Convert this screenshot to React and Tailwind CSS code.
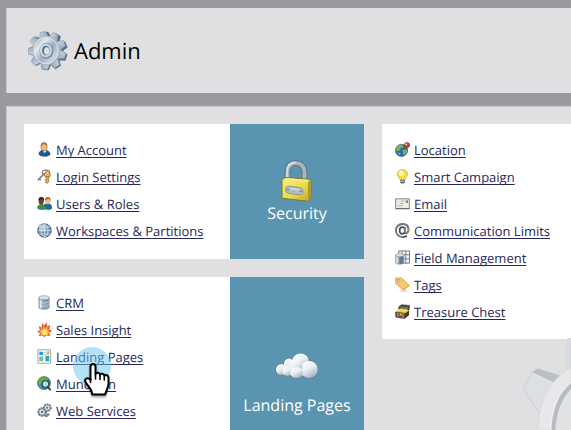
import React from "react";

function Icon({ children, className = "h-[15px] w-[15px]", viewBox = "0 0 16 16" }) {
  return (
    <svg aria-hidden="true" className={`shrink-0 ${className}`} viewBox={viewBox}>
      {children}
    </svg>
  );
}

const gearTeeth = [0, 40, 80, 120, 160, 200, 240, 280, 320];

function AdminGear() {
  return (
    <svg aria-hidden="true" className="h-11 w-10 shrink-0" viewBox="0 0 40 44">
      <defs>
        <linearGradient id="gearSteel" gradientUnits="userSpaceOnUse" x1="12" y1="4" x2="26" y2="4">
          <stop offset="0" stopColor="#d3dee8" />
          <stop offset="1" stopColor="#8c9fb0" />
        </linearGradient>
        <linearGradient id="gearFace" x1="0" y1="0" x2="1" y2="1">
          <stop offset="0" stopColor="#93a6b8" />
          <stop offset=".3" stopColor="#dfe8ef" />
          <stop offset=".55" stopColor="#9db0c1" />
          <stop offset=".8" stopColor="#c8d5e0" />
          <stop offset="1" stopColor="#8296a9" />
        </linearGradient>
      </defs>
      <g fill="#5c6f82" stroke="#4d5f70" strokeWidth=".6">
        {gearTeeth.map((a) => (
          <path key={a} d="M14.500 10 16.500 2.800H22.500L24.500 10Z" transform={`translate(1.500 .6) rotate(${a - 12} 19 21.500)`} />
        ))}
        <ellipse cx="20" cy="22" rx="13.500" ry="14.500" />
      </g>
      <g fill="url(#gearSteel)" stroke="#7c8fa1" strokeWidth=".5">
        {gearTeeth.map((a) => (
          <path key={a} d="M14 10 16 2.500H21.500L24 10Z" transform={`rotate(${a - 12} 19 21.500)`} />
        ))}
      </g>
      <ellipse cx="18.500" cy="21.500" rx="13.500" ry="14.500" fill="#a2b4c4" />
      <ellipse cx="18" cy="21.500" rx="12.200" ry="13.300" fill="url(#gearFace)" stroke="#dfe8ef" strokeWidth="1" />
      <ellipse cx="18.500" cy="21.800" rx="7" ry="8" fill="#8194a7" />
      <ellipse cx="17.800" cy="21.300" rx="6" ry="6.900" fill="#cbd8e3" />
      <ellipse cx="17.800" cy="21.500" rx="3.700" ry="4.800" fill="#5b6e83" />
      <ellipse cx="18.600" cy="22" rx="2.600" ry="3.800" fill="#e0e0e2" />
    </svg>
  );
}

const UserIcon = () => (
  <Icon>
    <path d="M2 13c0-3 3-4.500 6-4.500s6 2 6 4.500c-1.500 3-10 3-12 0Z" fill="#175b92" stroke="#113d68" strokeWidth=".6" />
    <path d="m6 8.500 2 3.500 2.500-3Z" fill="#eef4fa" />
    <ellipse cx="7.500" cy="5" rx="3.200" ry="4.300" fill="#edbd83" stroke="#84592b" strokeWidth=".6" />
    <path d="M4.200 5C3.600 2 5 .4 7.500.4S11.400 2 10.800 5C10 3 8 2.500 6.500 2.500Z" fill="#a87837" />
  </Icon>
);

const KeysIcon = () => (
  <Icon>
    <path d="m1 12 7-7.500" stroke="#777f85" strokeWidth="1.800" />
    <path d="m2 10 2 2" stroke="#777f85" strokeWidth="1.300" />
    <ellipse cx="9.500" cy="3.500" rx="4" ry="2.200" fill="none" stroke="#6c757c" strokeWidth="1.300" />
    <circle cx="11" cy="6" r="3.200" fill="#e7b562" stroke="#8d6427" strokeWidth=".8" />
    <path d="M10 8h2.500v6L11 15.500 8.500 14l1.500-1-1.500-1.500L10 10Z" fill="#dfa64b" stroke="#936523" strokeWidth=".6" />
    <path d="m11 4 2-2" stroke="#f6f6f6" />
  </Icon>
);

const UsersIcon = () => (
  <Icon>
    <path d="M7 12c0-3 2-4 4.500-4S16 10 16 13c-2 2-7 2-9-1Z" fill="#2467a0" stroke="#173c6b" strokeWidth=".5" />
    <ellipse cx="11.500" cy="5" rx="2.700" ry="3.700" fill="#edbd83" />
    <path d="M8.500 5c-.5-3 1-4 3-4s3.500 1 2.800 4L12 3Z" fill="#a7722e" />
    <path d="M.5 13c0-3 2-4 4.500-4s5 1.500 5 4c-1 2-8 2-9.500 0Z" fill="#2b944f" stroke="#175c2e" strokeWidth=".5" />
    <ellipse cx="4.500" cy="5.500" rx="2.700" ry="3.700" fill="#70402a" />
    <path d="M1.700 5C1 2.500 2.400 1 4.600 1s3.600 1.500 2.800 4L5 3Z" fill="#2b2422" />
  </Icon>
);

const GlobeIcon = () => (
  <Icon>
    <circle cx="8" cy="8" r="7.200" fill="#6f99ba" stroke="#44596b" />
    <ellipse cx="6" cy="5.500" rx="4" ry="3.800" fill="#a9c7dc" />
    <path d="M8 1v14M1 8h14M2.500 4.200h11M2.500 11.800h11" stroke="#dfeaf2" strokeWidth=".7" />
    <ellipse cx="8" cy="8" rx="3.700" ry="7" fill="none" stroke="#dfeaf2" strokeWidth=".7" />
  </Icon>
);

function Cylinder() {
  return (
    <>
      <path d="M2 3v10c0 3 11 3 11 0V3Z" fill="#93a6b4" stroke="#63727e" strokeWidth=".6" />
      <path d="M3 4v10l2 .7V5Z" fill="#dce5eb" />
      <path d="M8 5.500h4M8 8.500h4M8 11.500h4" stroke="#597488" />
      <ellipse cx="7.500" cy="3" rx="5.500" ry="2.200" fill="#dae2e7" stroke="#73818c" strokeWidth=".6" />
      <path d="M2 7c1 2 10 2 11 0M2 10.300c1 2 10 2 11 0" fill="none" stroke="#ecf1f4" strokeWidth=".7" />
    </>
  );
}

const DatabaseIcon = () => <Icon><Cylinder /></Icon>;

const FlameIcon = () => (
  <Icon>
    <path d="M3 9 2 4l3 2 .5-5L8 4l2-4 1 5 3-2-1 5 3 1-3 3 1 3-4-.5L8 16l-2.500-1.500L2 15l1-3-3-2Z" fill="#e7532b" />
    <path d="m4 9 0-3 2 2L7 4l2 3 2-3v4l2 0-1 2 2 1-2 1 0 2-2-.5L8 15l-2-1.500-2 .5.500-2L2 11Z" fill="#ffb52f" />
    <path d="m5 9 2 0 1-2 1 2 2 0-1 2 1 2H9l-1 1-1-1H5l1-2Z" fill="#fff08d" />
  </Icon>
);

const PageIcon = () => (
  <Icon>
    <path d="M1 .8h13.500v14.400H1Z" fill="#f8faf9" stroke="#8b989f" strokeWidth=".9" />
    <path d="M2.500 3h4v3.500h-4ZM9 7.500h4V13H9Z" fill="#2499dc" />
    <path d="M2.500 8h4v5h-4Z" fill="#5fb7df" />
    <path d="M8 3h1.500v1.200H8ZM10.500 2.500H13V5h-2.500Z" fill="#e99a64" />
    <path d="M3 10h3M3 12h3M8 6h5M8 10h5" stroke="#91bd6c" strokeWidth=".8" />
  </Icon>
);

const MunchkinIcon = () => (
  <Icon>
    <circle cx="7.500" cy="7.500" r="7" fill="#3d80b4" stroke="#436066" strokeWidth=".6" />
    <path d="M1 6c1-4 4-6 7-5l4 2-2 2-3-1-1 3-3 2 2 4-2-1Z" fill="#64ad45" />
    <path d="m12 3 2 4-2 4-3 3-2 0 3-4Z" fill="#397c43" />
    <path d="m11 11 3.500 4" stroke="#323e45" strokeWidth="2" />
    <circle cx="9" cy="8.500" r="3.500" fill="#b3def2" stroke="#2f4857" strokeWidth="1.200" />
  </Icon>
);

const ServicesIcon = () => (
  <Icon>
    <circle cx="5.500" cy="9.500" r="4.300" fill="#9aa6af" stroke="#596670" strokeWidth="1.500" strokeDasharray="2 1" />
    <circle cx="11" cy="5" r="3.800" fill="#aab5bd" stroke="#596670" strokeWidth="1.500" strokeDasharray="1.800 1" />
    <circle cx="5.500" cy="9.500" r="2.700" fill="#dce2e6" />
    <circle cx="11" cy="5" r="2.300" fill="#dce2e6" />
    <circle cx="5.500" cy="9.500" r="1.200" fill="#59656e" />
    <circle cx="11" cy="5" r="1" fill="#59656e" />
    <path d="m8 13 4-2 2 1-3 3H8Z" fill="#7a858d" />
  </Icon>
);

const LocationIcon = () => (
  <Icon>
    <circle cx="7" cy="9" r="6.500" fill="#286ca9" stroke="#294d67" strokeWidth=".6" />
    <path d="M1 8c1-4 4-6 7-5l1 3-3 0-1 3-3 1ZM8 8l4 0 1 2-2 4-2-1Z" fill="#75b947" />
    <path d="m3 11 3 1-1 2Z" fill="#82bfdf" />
    <circle cx="12.800" cy="3.300" r="2.900" fill="#d83531" stroke="#982021" strokeWidth=".5" />
    <circle cx="12" cy="2.500" r="1" fill="#fff1e6" />
    <path d="m11 5-2 3" stroke="#4d565c" strokeWidth=".8" />
  </Icon>
);

const BulbIcon = () => (
  <Icon>
    <path d="M8 .6c-3.500 0-5.500 2.300-5.500 5.200 0 2.500 2.300 3 2.800 5.700h5.400c.5-2.700 2.800-3.200 2.800-5.700C13.500 2.900 11.500.6 8 .6Z" fill="#f8db4b" stroke="#baa034" strokeWidth=".6" />
    <ellipse cx="6.800" cy="4.500" rx="2.700" ry="3" fill="#fff6b0" />
    <path d="M5.500 11.500h5v3l-1 1h-3l-1-1Z" fill="#62686b" />
    <path d="M5.500 13h4" stroke="#d8dcde" />
  </Icon>
);

const EmailIcon = () => (
  <Icon>
    <path d="M.7 3h14.600v10.500H.7Z" fill="#eceeed" stroke="#7b8283" />
    <path d="M1 13.500h14.500" stroke="#606565" />
    <path d="M11.500 4.500h2.300v3h-2.300Z" fill="#87914e" />
    <path d="M3 10.500h6M5 8h4" stroke="#9ba2a3" strokeWidth=".8" />
    <path d="m6 6 1.500-1L9 6l1.500-1" fill="none" stroke="#868e90" strokeWidth=".7" />
  </Icon>
);

const AtIcon = () => (
  <Icon>
    <g fill="none" strokeLinecap="round">
      <path d="M10.500 5v5c0 1.800 4 1 4-2.500C14.500 3.500 12 1 8 1S1 4 1 8s3 7 7 7c2 0 3-.5 4-1M10.500 8A2.800 3 0 1 1 5 8a2.800 3 0 1 1 5.500 0Z" stroke="#4b5052" strokeWidth="2" />
      <path d="M10.500 5v5c0 1.800 4 1 4-2.500C14.500 3.500 12 1 8 1S1 4 1 8s3 7 7 7" stroke="#c5cacc" strokeWidth=".6" />
    </g>
  </Icon>
);

const FieldIcon = () => (
  <Icon>
    <path d="M4 1h11.500v13H4Z" fill="#f2f4f5" stroke="#6b767d" />
    <path d="M7.500 1v13M11.500 1v13M4 5h11.500M4 9.500h11.500" stroke="#6b767d" strokeWidth=".9" />
    <g transform="translate(-1 3) scale(.8)">
      <Cylinder />
      <path d="M7 6v9c3 0 5-.5 5.500-2V5Z" fill="#5d7d93" />
    </g>
  </Icon>
);

const TagIcon = () => (
  <Icon>
    <ellipse cx="9" cy="15" rx="5" ry=".8" fill="#ded9d0" />
    <path d="m.5 1 6-.5L15.700 9 9 14.500.8 7Z" fill="#efb85a" stroke="#d99b40" strokeWidth=".6" />
    <path d="m1 1.500 5-.5 8 7.500-5 4L1.500 6.500Z" fill="#f6c873" />
    <circle cx="3.700" cy="3.800" r="1.800" fill="#a89a75" />
    <circle cx="3.900" cy="4" r=".8" fill="#fff" />
  </Icon>
);

const ChestIcon = () => (
  <Icon>
    <path d="m4 3 3-2.300 8.500.8L15 6l-2 3-9-2Z" fill="#4b4b3c" stroke="#2e302b" strokeWidth=".6" />
    <path d="m6 3 8 .5-1 3-8-.5Z" fill="#827a56" />
    <path d="M1 8 5 5l9 1 1 2-4 3Z" fill="#f0ce39" />
    <path d="m3 7 3-1 3 1 3-.5" stroke="#fff194" fill="none" />
    <path d="m.5 8.500 10 1.500v5.500L1 14Z" fill="#755033" stroke="#3b3024" strokeWidth=".7" />
    <path d="m10.500 10 4.500-3v5l-4.500 3.500Z" fill="#4b3829" />
    <path d="M3 9v5M8.500 10v5" stroke="#b3aa83" />
    <path d="M5 10h2v2.500H5Z" fill="#d1b665" />
  </Icon>
);

function LockIcon() {
  return (
    <Icon className="h-[42px] w-8" viewBox="0 0 32 42">
      <defs>
        <linearGradient id="lockBody" x1="0" y1="0" x2="1" y2="1">
          <stop offset="0" stopColor="#f5ee88" />
          <stop offset=".55" stopColor="#e6dc50" />
          <stop offset="1" stopColor="#b8a432" />
        </linearGradient>
      </defs>
      <path d="M6.500 21V13C6.500 5.500 9.500 3 14.500 3S23.500 6 23.500 13v8" fill="none" stroke="#596a77" strokeWidth="5.600" />
      <path d="M6.500 21V13C6.500 5.500 9.500 3 14.500 3S23.500 6 23.500 13v8" fill="none" stroke="#a8b6c1" strokeWidth="4" />
      <path d="M6 20v-8C6 5.500 9.500 2.500 14.500 2.500" fill="none" stroke="#e4ebef" strokeWidth="1.300" />
      <path d="m1 19.500 4-2 25 2V38l-3.500 3.200-25.500-3Z" fill="url(#lockBody)" stroke="#827728" />
      <path d="m1.500 19.500 4-1.500 23.500 2-2.500 2Z" fill="#f5ed7a" />
      <path d="m27 22 2.500-2v17.500L27 40.500Z" fill="#ae9b2b" />
      <path d="M4.500 29.500c0-2.500 1.500-3.500 4-3.200l10 1.200c2.500.4 3.500 2 3.500 4.300s-1.500 3.200-4 2.900l-9.500-1.200c-2.500-.3-4-1.500-4-4Z" fill="#b3bcc4" stroke="#757f87" strokeWidth=".7" />
      <path d="m9 28.500 9 1.200" stroke="#d3dae0" strokeWidth="1.500" />
      <circle cx="7" cy="29.800" r=".8" fill="#59656e" />
      <circle cx="19.700" cy="31.500" r=".8" fill="#59656e" />
    </Icon>
  );
}

function CloudIcon() {
  return (
    <Icon className="h-[54px] w-11" viewBox="0 0 44 54">
      <defs>
        <linearGradient id="cloudPuff" x1="0" y1="0" x2=".6" y2="1">
          <stop offset="0" stopColor="#ffffff" />
          <stop offset=".55" stopColor="#e9eff3" />
          <stop offset="1" stopColor="#a3b5c3" />
        </linearGradient>
      </defs>
      <g fill="#6c8292" stroke="#6c8292" strokeWidth="1.600">
        <ellipse cx="25.500" cy="21.500" rx="8.500" ry="8" />
        <ellipse cx="14" cy="24" rx="5" ry="5.500" />
        <ellipse cx="6.500" cy="29.500" rx="5.500" ry="5.500" />
        <ellipse cx="34" cy="29.500" rx="8.800" ry="8.500" />
        <ellipse cx="21.500" cy="32.500" rx="7" ry="6" />
        <ellipse cx="12.500" cy="31" rx="5" ry="5" />
      </g>
      <g fill="url(#cloudPuff)">
        <ellipse cx="25.500" cy="21.500" rx="8.500" ry="8" />
        <ellipse cx="14" cy="24" rx="5" ry="5.500" />
        <ellipse cx="6.500" cy="29.500" rx="5.500" ry="5.500" />
        <ellipse cx="34" cy="29.500" rx="8.800" ry="8.500" />
        <ellipse cx="20.500" cy="26" rx="7" ry="7" />
        <ellipse cx="12.500" cy="31" rx="5" ry="5" />
        <ellipse cx="21.500" cy="32.500" rx="6.500" ry="5.500" />
      </g>
    </Icon>
  );
}

function BackdropGear() {
  return (
    <svg aria-hidden="true" className="absolute right-0 bottom-0 h-[92px] w-12" viewBox="0 0 48 92">
      <path d="M44 40V1l4-1v40Z" fill="#d9dee3" stroke="#cbd0d5" strokeWidth=".7" />
      <path d="m0 50 9-16 6-3 25 8-24 36Z" fill="#dbe0e4" stroke="#c8ccd0" strokeWidth=".8" />
      <path d="m9 34 6-3.500L41 39l-9 6Z" fill="#bcc0c5" />
      <path d="M48 30C28 41 16 61 15 92h33Z" fill="#e8e8ea" stroke="#dadbdd" strokeWidth="1" />
      <path d="M48 45C35 56 29 73 28.500 92H48Z" fill="#b8bbc0" />
      <path d="M48 51C38 61 33 76 32.500 92H48Z" fill="#e1e2e4" />
      <path d="M48 44C34 55 28 73 27.500 92" fill="none" stroke="#f0f0f1" strokeWidth="1" />
    </svg>
  );
}

function HandPointer() {
  return (
    <span className="pointer-events-none absolute top-0 left-[17px] block h-[52px] w-11">
      <span className="absolute top-0 left-0 h-[38px] w-[38px] rounded-full bg-[#68c4ee]/50" />
      <svg aria-hidden="true" className="absolute top-4 left-2.5 h-9 w-7 drop-shadow-[0_2px_1px_rgba(0,0,0,0.35)]" viewBox="0 0 28 36">
        <path
          d="M7.500 17V3.800c0-3.600 5-3.600 5 0V11c1-1.800 4-1.500 4.500.7 1-1.500 3.800-1.200 4.300 1 1.400-1.400 4.200-.4 4.200 2V21c0 3-1.800 4.500-2.200 7.500l-1.300 3H9.200L8.500 28C7 24.500 4 22 2.500 19s2-5.500 5-2Z"
          fill="#fff"
          stroke="#000"
          strokeWidth="2"
          strokeLinejoin="round"
        />
        <path d="M7.500 16v3.500M12.500 11v5M17 12v4.500M21.300 13.500V17" stroke="#000" strokeWidth="1.600" strokeLinecap="round" />
      </svg>
    </span>
  );
}

const securityLinks = [
  ["My Account", UserIcon],
  ["Login Settings", KeysIcon],
  ["Users & Roles", UsersIcon],
  ["Workspaces & Partitions", GlobeIcon],
];

const integrationLinks = [
  ["CRM", DatabaseIcon],
  ["Sales Insight", FlameIcon],
  ["Landing Pages", PageIcon, true],
  ["Munchkin", MunchkinIcon],
  ["Web Services", ServicesIcon],
];

const settingsLinks = [
  ["Location", LocationIcon],
  ["Smart Campaign", BulbIcon],
  ["Email", EmailIcon],
  ["Communication Limits", AtIcon],
  ["Field Management", FieldIcon],
  ["Tags", TagIcon],
  ["Treasure Chest", ChestIcon],
];

function LinkList({ links }) {
  return (
    <ul className="min-w-0 flex-1 bg-white px-[13px] pt-3 pb-3.5">
      {links.map(([label, Glyph, pointed]) => (
        <li key={label} className={`relative flex h-[27px] items-center gap-1 ${pointed ? "z-10" : ""}`}>
          <Glyph />
          <a
            href="#"
            className="relative text-[13px] leading-5 whitespace-nowrap text-[#28285c] underline underline-offset-2 [text-decoration-skip-ink:none]"
          >
            {label}
            {pointed && <HandPointer />}
          </a>
        </li>
      ))}
    </ul>
  );
}

function Tile({ label, children }) {
  return (
    <div className="flex w-[134px] shrink-0 flex-col items-center justify-center bg-[#5994b0] text-white">
      {children}
      <h2 className="text-base leading-[22px]">{label}</h2>
    </div>
  );
}

export default function App() {
  return (
    <div className="flex h-screen flex-col gap-[13px] overflow-hidden bg-[#9a999d] pt-2 pl-[6px] font-['Open_Sans',sans-serif] [text-rendering:geometricPrecision]">
      <header className="flex h-[85px] shrink-0 items-center gap-[6px] border-l border-[#c9c9cc] bg-[#e0e0e2] pl-[21px]">
        <AdminGear />
        <h1 className="text-[22px] leading-8 text-black">Admin</h1>
      </header>
      <main className="relative flex flex-1 items-start gap-[18px] overflow-hidden border-t border-l border-[#c9c9cc] bg-[#e0e0e2] pt-[17px] pl-[17px]">
        <BackdropGear />
        <div className="flex w-[340px] shrink-0 flex-col gap-[18px]">
          <section className="relative flex min-h-[135px]">
            <LinkList links={securityLinks} />
            <Tile label="Security">
              <LockIcon />
            </Tile>
          </section>
          <section className="relative flex min-h-[202px]">
            <LinkList links={integrationLinks} />
            <Tile label="Landing Pages">
              <CloudIcon />
            </Tile>
          </section>
        </div>
        <section className="flex min-w-0 flex-1">
          <LinkList links={settingsLinks} />
        </section>
      </main>
    </div>
  );
}
